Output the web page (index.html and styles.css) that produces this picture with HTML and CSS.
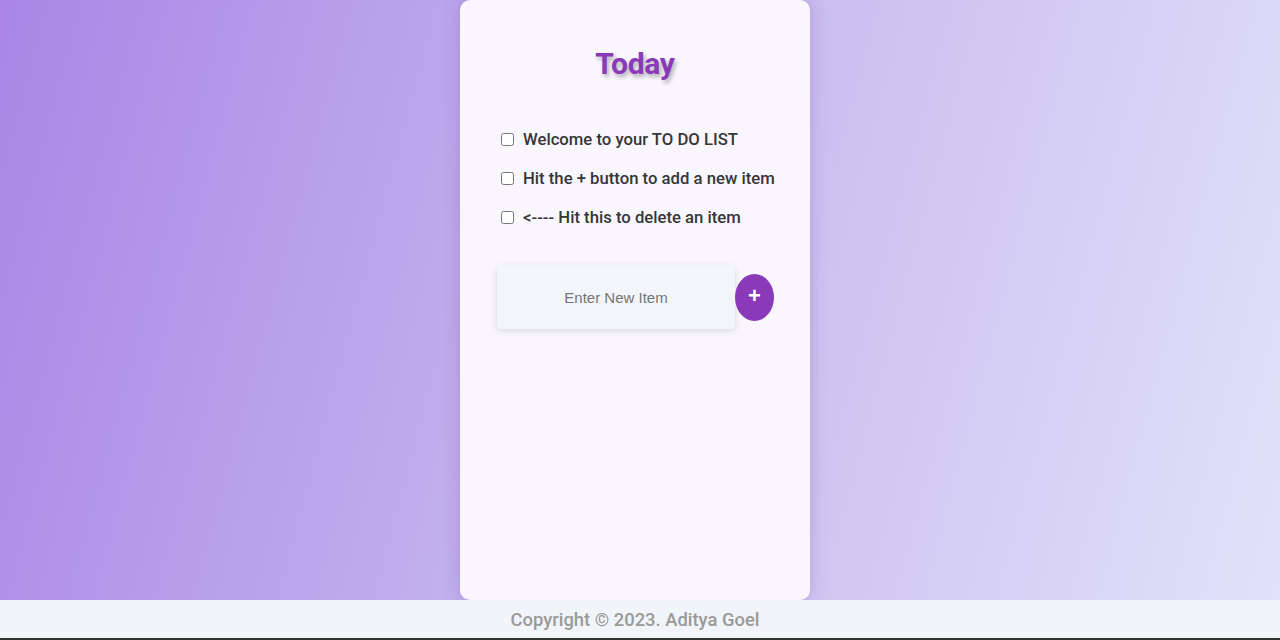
FILE: index.html
```html
<!DOCTYPE html>
<html lang="en">
<head>
<meta charset="utf-8">
<title>To Do List</title>
<link rel="stylesheet" href="styles.css">
</head>
<body>
<main class="page">
  <section class="card">
    <h1 class="title">Today</h1>
    <ul class="items">
      <li class="item"><input type="checkbox" class="check"><span>Welcome to your TO DO LIST</span></li>
      <li class="item"><input type="checkbox" class="check"><span>Hit the + button to add a new item</span></li>
      <li class="item"><input type="checkbox" class="check"><span>&lt;---- Hit this to delete an item</span></li>
    </ul>
    <form class="add-form">
      <input type="text" class="new-item" placeholder="Enter New Item">
      <button type="button" class="add-btn">+</button>
    </form>
  </section>
</main>
<footer class="footer">Copyright © 2023. Aditya Goel</footer>
</body>
</html>
```
FILE: styles.css
```css
html, body {
  margin: 0;
  padding: 0;
}
body {
  height: 640px;
  overflow: hidden;
  display: flex;
  flex-direction: column;
  font-family: Roboto, "Liberation Sans", sans-serif;
  background: linear-gradient(105deg, #a986e6 0%, #c7b8ee 50%, #e2e2fa 100%);
}
.page {
  height: 600px;
  display: flex;
  justify-content: center;
  padding-right: 10px;
}
.card {
  width: 350px;
  height: 600px;
  box-sizing: border-box;
  background: #f9f7fd;
  border-radius: 10px;
  box-shadow: 0 0 18px rgba(90, 60, 150, 0.25);
  padding: 46px 0 0 0;
}
.title {
  margin: 0;
  text-align: center;
  font-size: 30px;
  line-height: 36px;
  font-weight: 700;
  color: #8a3ab9;
  text-shadow: 2px 3px 4px rgba(0, 0, 0, 0.3);
  letter-spacing: -0.3px;
}
.items {
  list-style: none;
  margin: 38px 0 0 0;
  padding: 0 0 0 41px;
}
.item {
  display: flex;
  align-items: center;
  gap: 9px;
  height: 39px;
  font-size: 16.7px;
  font-weight: 500;
  color: #363636;
}
.check {
  margin: 0;
  width: 13px;
  height: 13px;
}
.add-form {
  display: flex;
  align-items: center;
  margin: 28px 0 0 37px;
}
.new-item {
  width: 238px;
  height: 64px;
  box-sizing: border-box;
  border: none;
  border-radius: 4px;
  background: #f2f5f9;
  box-shadow: 0 2px 6px rgba(0, 0, 0, 0.12);
  text-align: center;
  font-family: "Liberation Sans", Arial, sans-serif;
  font-size: 15px;
  color: #555;
  outline: none;
}
.new-item::placeholder {
  color: #757575;
}
.add-btn {
  width: 39px;
  height: 47px;
  border: none;
  border-radius: 50%;
  background: #8a3ab9;
  color: #fff;
  font-family: "Liberation Sans", Arial, sans-serif;
  font-size: 22px;
  font-weight: 700;
  padding: 0 0 3px 0;
  line-height: 1;
}
.footer {
  height: 38px;
  box-sizing: border-box;
  height: 40px;
  padding-top: 1px;
  background: #f1f4f8;
  border-bottom: 2px solid #333;
  display: flex;
  align-items: center;
  justify-content: center;
  padding-right: 10px;
  font-size: 18.4px;
  font-weight: 500;
  color: #9a9a9a;
}
```
